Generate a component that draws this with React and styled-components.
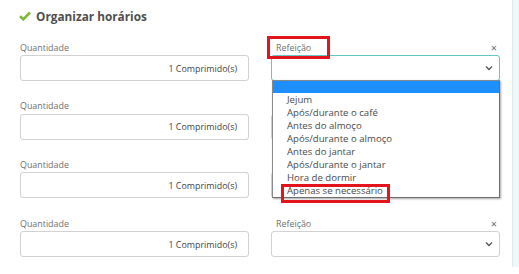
import React from "react";
import styled, { createGlobalStyle } from "styled-components";

const Global = createGlobalStyle`
  html, body { margin: 0; padding: 0; background: #fff; }
  body { font-family: "Open Sans", "Noto Sans", sans-serif; }
`;

const Page = styled.div`
  display: flex;
  width: 519px;
  height: 274px;
  overflow: hidden;
`;

const Panel = styled.div`
  width: 512px;
  flex: none;
  padding: 6px 0 0 20px;
  box-sizing: border-box;
  position: relative;
`;

const Side = styled.div`
  flex: 1;
  height: 267px;
  background: #eff8f9;
  border-left: 1px solid #dfecee;
`;

const Title = styled.h2`
  display: flex;
  align-items: center;
  gap: 5px;
  margin: 0 0 13px -1px;
  height: 20px;
  font-size: 11.8px;
  font-weight: 700;
  color: #4f4f4f;
`;

const Grid = styled.div`
  display: grid;
  grid-template-columns: 229px 229px;
  column-gap: 22px;
  row-gap: 16.7px;
`;

const Field = styled.div`
  display: flex;
  flex-direction: column;
  position: relative;
`;

const LabelRow = styled.div`
  display: flex;
  justify-content: space-between;
  align-items: center;
  height: 16px;
  padding: 0 ${(p) => (p.$right ? "3px" : "0")} 0 ${(p) => (p.$right ? "5px" : "0")};
`;

const Label = styled.span`
  position: relative;
  font-size: 8.9px;
  color: #707070;
`;

const Close = styled.span`
  font-size: 11px;
  color: #6a6a6a;
  line-height: 1;
`;

const Input = styled.div`
  height: 26px;
  box-sizing: border-box;
  border: 1px solid #d2d2d2;
  border-radius: 3px;
  display: flex;
  align-items: center;
  justify-content: flex-end;
  padding-right: 11px;
  font-size: 8.9px;
  color: #444;
`;

const Select = styled.div`
  height: 26px;
  box-sizing: border-box;
  border: 1px solid ${(p) => (p.$focus ? "#62c6c6" : "#d2d2d2")};
  border-radius: 3px;
  display: flex;
  align-items: center;
  justify-content: flex-end;
  padding-right: 6px;
`;

const Highlight = styled.span`
  position: absolute;
  border: 3px solid #e3141c;
  pointer-events: none;
  box-sizing: border-box;
`;

const Dropdown = styled.ul`
  position: absolute;
  z-index: 5;
  left: 1px;
  top: 41px;
  width: 228px;
  margin: 0;
  padding: 0;
  list-style: none;
  background: #fff;
  box-sizing: border-box;
  border: 1px solid #8a8a8a;
  border-right-color: #6e6e6e;
  border-bottom-color: #6e6e6e;
  box-shadow: 1px 1px 2px rgba(0, 0, 0, 0.35);
`;

const Option = styled.li`
  position: relative;
  height: ${(p) => (p.$selected ? "12px" : "13px")};
  line-height: 13px;
  padding-left: 14px;
  font-size: 9.6px;
  color: #4a4a4a;
  background: ${(p) => (p.$selected ? "#1e8fff" : "transparent")};
  white-space: nowrap;
`;

const Chevron = () => (
  <svg width="8" height="6" viewBox="0 0 8 6">
    <path d="M1 1.5 L4 4.5 L7 1.5" fill="none" stroke="#555" strokeWidth="1.4" />
  </svg>
);

const Check = () => (
  <svg width="12" height="10" viewBox="0 0 12 10">
    <path d="M1 5.2 L4.3 8.3 L11 1.5" fill="none" stroke="#7cb83c" strokeWidth="2.6" />
  </svg>
);

const options = [
  "Jejum",
  "Após/durante o café",
  "Antes do almoço",
  "Após/durante o almoço",
  "Antes do jantar",
  "Após/durante o jantar",
  "Hora de dormir",
  "Apenas se necessário",
];

export default function App() {
  const rows = [0, 1, 2, 3];
  return (
    <>
      <Global />
      <Page>
        <Panel>
          <Title>
            <Check />
            Organizar horários
          </Title>
          <Grid>
            {rows.map((r) => (
              <React.Fragment key={r}>
                <Field>
                  <LabelRow>
                    <Label>Quantidade</Label>
                  </LabelRow>
                  <Input>1 Comprimido(s)</Input>
                </Field>
                <Field>
                  <LabelRow $right>
                    <Label>
                      Refeição
                      {r === 0 && (
                        <Highlight style={{ left: -9, top: -5, width: 63, height: 23 }} />
                      )}
                    </Label>
                    <Close>×</Close>
                  </LabelRow>
                  <Select $focus={r === 0}>
                    <Chevron />
                  </Select>
                  {r === 0 && (
                    <Dropdown>
                      <Option $selected />
                      {options.map((o, i) => (
                        <Option key={o}>
                          {o}
                          {i === options.length - 1 && (
                            <Highlight style={{ left: 8, top: 0, width: 109, height: 19 }} />
                          )}
                        </Option>
                      ))}
                    </Dropdown>
                  )}
                </Field>
              </React.Fragment>
            ))}
          </Grid>
        </Panel>
        <Side />
      </Page>
    </>
  );
}
